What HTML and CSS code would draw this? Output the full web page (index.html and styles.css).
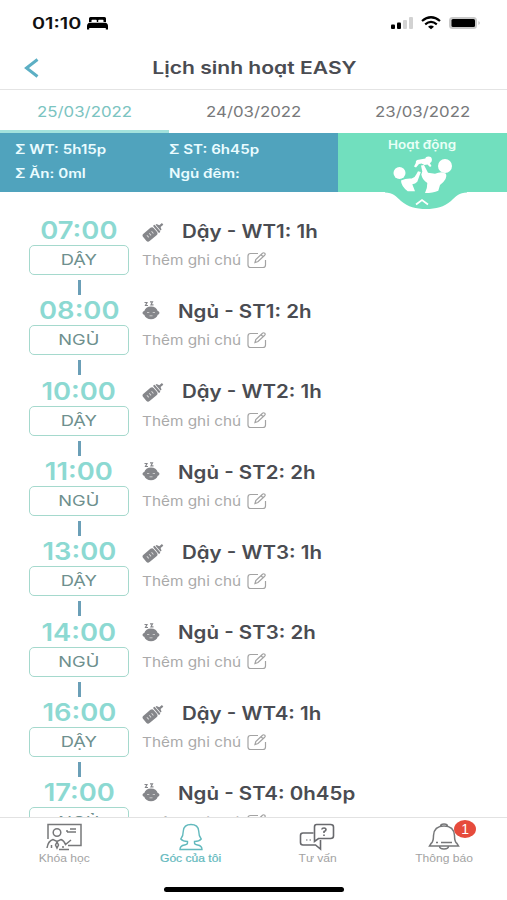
FILE: index.html
```html
<!DOCTYPE html>
<html lang="vi">
<head>
    <meta charset="UTF-8">
    <meta name="viewport" content="width=device-width, initial-scale=1.0">
    <title>Lịch sinh hoạt EASY</title>
    <link rel="stylesheet" href="styles.css">
</head>
<body>
    <svg class="sprite">
        <symbol id="bottle" viewBox="0 0 24 22">
            <g transform="rotate(-40 12 11)" fill="#85868a">
                <rect x="0" y="6" width="14.500" height="10" rx="2.500"/>
                <rect x="15.300" y="6" width="2.200" height="10" rx="1"/>
                <path d="M18.200 7h1.400l1.200 2.900h3.700v2.200h-3.700l-1.200 2.900h-1.400z"/>
                <path d="M4.200 9.500v3M7.400 9.500v3M10.600 9.500v3" stroke="#dcdcdc" stroke-width="1"/>
            </g>
        </symbol>
        <symbol id="baby" viewBox="0 0 18 20">
            <path d="M2.500 1.500h2.500L3.500 4.500h2.500M8 .8h2.500L9 3.800h2.500" fill="none" stroke="#85868a" stroke-width="1.200"/>
            <path d="M9 5.500c3.600 0 6 1.800 6.700 4.500 2.300.2 2.300 3.500.1 3.700-1 2.800-3.500 4.600-6.800 4.600s-5.800-1.800-6.800-4.600C0 13.500 0 10.200 2.300 10 3 7.300 5.400 5.500 9 5.500z" fill="#85868a"/>
            <path d="M5 11.500h2.300M10.700 11.500H13M7.500 14.800h3" stroke="#c9c9c9" stroke-width="1"/>
        </symbol>
        <symbol id="edit" viewBox="0 0 20 17">
            <g fill="none" stroke="#a3a3a3" stroke-width="1.200">
                <path d="M11 1.500H3.500Q1 1.500 1 4v9q0 2.500 2.500 2.500h12.500q2.500 0 2.500-2.500V8"/>
                <path d="M8 10.500l.8-3L15.500 1.200q1-.9 2.200 0 1 1 0 2L11 9.500zM14 2.700l2.200 2"/>
            </g>
        </symbol>
    </svg>

    <div class="status-bar">
        <span class="clock">01:10</span>
        <svg class="bed" width="21" height="13" viewBox="0 0 21 13">
            <path d="M3.500 0h14q1.500 0 1.500 1.500V5H16.500V3.500q0-.8-.8-.8H12q-.8 0-.8.800V5H9.800V3.500q0-.8-.8-.8H5.300q-.8 0-.8.800V5H2V1.500Q2 0 3.500 0zM2 5.800h17q2 1 2 3V12.500h-2.200V11H2.200v1.500H0V8.800q0-2 2-3z"/>
        </svg>
        <svg class="phone-state" width="92" height="15" viewBox="0 0 92 15">
            <rect x="1" y="8.500" width="4" height="4.500" rx="1"/>
            <rect x="7" y="6.500" width="4" height="6.500" rx="1"/>
            <rect x="13" y="4" width="4" height="9" rx="1" fill="#d2d2d2"/>
            <rect x="19" y="1" width="4" height="12" rx="1" fill="#d2d2d2"/>
            <path d="M32 5q9-7.500 18 0M35.200 8.300q5.800-4.700 11.600 0" fill="none" stroke="#000" stroke-width="2.200"/>
            <path d="M38 10.700q3-2.200 6 0l-3 2.500z"/>
            <rect x="59" y="1" width="28" height="12" rx="3.500" fill="#c9c9c9"/>
            <rect x="61.500" y="3" width="23.500" height="8" rx="1.500"/>
            <path d="M88.500 5q2.500 2 0 4z" fill="#bbb"/>
        </svg>
    </div>

    <header class="header">
        <svg class="back" width="16" height="20" viewBox="0 0 16 20">
            <path d="M13.500 1.500L2.500 10l11 8.500" fill="none" stroke="#5cafc4" stroke-width="3"/>
        </svg>
        <h1><span>Lịch sinh hoạt EASY</span></h1>
    </header>

    <div class="tabs">
        <div class="tab active"><span>25/03/2022</span></div>
        <div class="tab"><span>24/03/2022</span></div>
        <div class="tab"><span>23/03/2022</span></div>
    </div>

    <div class="summary">
        <div class="totals">
            <span class="total wt">Σ WT: 5h15p</span>
            <span class="total st">Σ ST: 6h45p</span>
            <span class="total eat">Σ Ăn: 0ml</span>
            <span class="total night">Ngủ đêm:</span>
        </div>
        <div class="activity">
            <span>Hoạt động</span>
            <svg class="bulge" width="82" height="19" viewBox="0 0 82 19">
                <path d="M0 0h82v1.500c-8 0-11 4-16 8.500C59 16 51 18 41 18S23 16 16 10C11 5.500 8 1.500 0 1.500z" fill="#71dfbe"/>
                <path d="M31 13.500l6-4.500 6 4.500" fill="none" stroke="#fff" stroke-width="1.800"/>
            </svg>
            <svg class="family" width="60" height="38" viewBox="0 0 60 38" fill="#fff">
                <circle cx="6.500" cy="17" r="6"/>
                <circle cx="52" cy="10" r="7"/>
                <circle cx="35.500" cy="3.800" r="3.400"/>
                <path d="M8 24.500q5-2.500 10.700-2 3.500-1 4.800-4.500l1.500-2.700 2.800.7-3.500 9.700q-2 2-5 2.500l2.700 7.100h-7.300Q8 30 8 24.500z"/>
                <path d="M28 9.500l3-.5 4 7.700 7 1q7-3 11 0 2 5-6 11.300l-1.700 5.700Q40 37 32 37q2.500-5 2.300-10-5-3-6-8.500l1-3z"/>
                <path d="M32.500 2.500l-8.500 1.500q-1.500 1-1.200 3l-1.800 3.500 2 1 3-3.500 2.500-.5 3 1.500 3-.5 2.500 2.500 1.500-1-2-3.500z"/>
            </svg>
        </div>
    </div>

    <main class="schedule">
        <div class="entry">
            <div class="slot">
                <div class="time"><span>07:00</span></div>
                <div class="state"><span>DẬY</span></div>
            </div>
            <div class="detail">
                <div class="name wake"><svg><use href="#bottle"/></svg><span>Dậy - WT1: 1h</span></div>
                <div class="note"><span>Thêm ghi chú</span><svg><use href="#edit"/></svg></div>
            </div>
        </div>
        <div class="entry">
            <div class="slot">
                <div class="time"><span>08:00</span></div>
                <div class="state"><span>NGỦ</span></div>
            </div>
            <div class="detail">
                <div class="name sleep"><svg><use href="#baby"/></svg><span>Ngủ - ST1: 2h</span></div>
                <div class="note"><span>Thêm ghi chú</span><svg><use href="#edit"/></svg></div>
            </div>
        </div>
        <div class="entry">
            <div class="slot">
                <div class="time"><span>10:00</span></div>
                <div class="state"><span>DẬY</span></div>
            </div>
            <div class="detail">
                <div class="name wake"><svg><use href="#bottle"/></svg><span>Dậy - WT2: 1h</span></div>
                <div class="note"><span>Thêm ghi chú</span><svg><use href="#edit"/></svg></div>
            </div>
        </div>
        <div class="entry">
            <div class="slot">
                <div class="time"><span>11:00</span></div>
                <div class="state"><span>NGỦ</span></div>
            </div>
            <div class="detail">
                <div class="name sleep"><svg><use href="#baby"/></svg><span>Ngủ - ST2: 2h</span></div>
                <div class="note"><span>Thêm ghi chú</span><svg><use href="#edit"/></svg></div>
            </div>
        </div>
        <div class="entry">
            <div class="slot">
                <div class="time"><span>13:00</span></div>
                <div class="state"><span>DẬY</span></div>
            </div>
            <div class="detail">
                <div class="name wake"><svg><use href="#bottle"/></svg><span>Dậy - WT3: 1h</span></div>
                <div class="note"><span>Thêm ghi chú</span><svg><use href="#edit"/></svg></div>
            </div>
        </div>
        <div class="entry">
            <div class="slot">
                <div class="time"><span>14:00</span></div>
                <div class="state"><span>NGỦ</span></div>
            </div>
            <div class="detail">
                <div class="name sleep"><svg><use href="#baby"/></svg><span>Ngủ - ST3: 2h</span></div>
                <div class="note"><span>Thêm ghi chú</span><svg><use href="#edit"/></svg></div>
            </div>
        </div>
        <div class="entry">
            <div class="slot">
                <div class="time"><span>16:00</span></div>
                <div class="state"><span>DẬY</span></div>
            </div>
            <div class="detail">
                <div class="name wake"><svg><use href="#bottle"/></svg><span>Dậy - WT4: 1h</span></div>
                <div class="note"><span>Thêm ghi chú</span><svg><use href="#edit"/></svg></div>
            </div>
        </div>
        <div class="entry">
            <div class="slot">
                <div class="time"><span>17:00</span></div>
                <div class="state"><span>NGỦ</span></div>
            </div>
            <div class="detail">
                <div class="name sleep"><svg><use href="#baby"/></svg><span>Ngủ - ST4: 0h45p</span></div>
                <div class="note"><span>Thêm ghi chú</span><svg><use href="#edit"/></svg></div>
            </div>
        </div>
    </main>

    <nav class="bottom-nav">
        <div class="nav-item">
            <svg width="36" height="28" viewBox="0 0 36 28" fill="none" stroke="#77787a" stroke-width="1.500">
                <path d="M2 16V1.500h33v21H22"/>
                <circle cx="11" cy="9.500" r="3.800"/>
                <path d="M1 25q1-7 6-8.500l4 2 4-2q3 1 4.500 5l5.500-4.500M5.500 25v-3M11 19l-1.500 3 1.500 3 1.500-3zM17 25v-2M13 26.500h10M20 8h2M24 6h6M21 9h9"/>
            </svg>
            <span>Khóa học</span>
        </div>
        <div class="nav-item active">
            <svg width="26" height="28" viewBox="0 0 26 28" fill="none" stroke="#62b9bd" stroke-width="1.400">
                <path d="M9.500 18.500Q5 18.500 2.800 16q2.500-3 2.500-8 .5-6.500 7.700-6.500T20.700 8q0 5 2.500 8-2 2.500-6.700 2.500v1.500q0 1.500 3 2 4.500.7 4.500 4.500H2q0-3.800 4.500-4.500 3-.5 3-2z"/>
            </svg>
            <span>Góc của tôi</span>
        </div>
        <div class="nav-item">
            <svg width="36" height="28" viewBox="0 0 36 28" fill="none" stroke="#68696d" stroke-width="1.600">
                <path d="M14.500 10H4Q1.500 10 1.500 12.500v7Q1.500 22 4 22h12.500l5 4v-9"/>
                <path d="M17.500 1.500h14Q34.500 1.500 34.500 4v9q0 2.500-3 2.500h-12l-4 3V4q0-2.500 2-2.500z"/>
                <path d="M7 17h1.500M10.500 17H12" stroke-width="1.200"/>
                <path d="M22.800 6.500q.2-1.500 2.200-1.500t2 1.700Q27 8 25 8.500V10M25 11.500V13"/>
            </svg>
            <span>Tư vấn</span>
        </div>
        <div class="nav-item">
            <svg width="32" height="28" viewBox="0 0 32 28" fill="none" stroke="#77787a" stroke-width="1.500">
                <path d="M12.500 3.500q0-2.500 3.500-2.500t3.500 2.500M3 20.500q2.500-1.500 2.500-8Q6 3 16 3t10.500 9.500q0 6.500 2.500 8l1.500 2.500h-29zM8 19.500h2M13 19.500h11M11.500 23q0 3 4.500 3t4.500-3"/>
            </svg>
            <span>Thông báo</span>
            <b class="badge">1</b>
        </div>
    </nav>
    <div class="home-bar"></div>
</body>
</html>
```
FILE: styles.css
```css
* {
    margin: 0;
    padding: 0;
    box-sizing: border-box;
}

body {
    width: 507px;
    height: 900px;
    overflow: hidden;
    display: flex;
    flex-direction: column;
    background: #fff;
    color: #4a4c52;
    font-family: 'Inter', 'Noto Sans', sans-serif;
    font-feature-settings: 'cv11';
}

span {
    display: inline-block;
    white-space: nowrap;
}

svg {
    flex-shrink: 0;
}

.sprite {
    position: absolute;
    width: 0;
    height: 0;
}

.status-bar {
    height: 46px;
    flex-shrink: 0;
    display: flex;
    align-items: center;
    padding-left: 32px;
}

.clock {
    width: 55px;
    font-size: 16px;
    font-weight: 600;
    color: #111;
    transform: scaleX(1.24);
    transform-origin: left;
}

.phone-state {
    margin-left: auto;
    margin-right: 25px;
}

.header {
    height: 44px;
    flex-shrink: 0;
    display: flex;
    align-items: center;
    padding-left: 24px;
    border-bottom: 1px solid #e4e4e4;
}

.header h1 {
    flex: 1;
    margin-right: 39px;
    text-align: center;
    font-size: 17px;
    font-weight: 600;
}

.header h1 span {
    transform: scaleX(1.24);
}

.tabs {
    height: 43px;
    flex-shrink: 0;
    display: grid;
    grid-template-columns: repeat(3, 1fr);
}

.tab {
    display: flex;
    align-items: center;
    justify-content: center;
    padding-top: 2px;
    font-size: 14px;
    color: #78797b;
    border-bottom: 3px solid transparent;
}

.tab span {
    transform: scaleX(1.2);
}

.tab.active {
    color: #7bc4c1;
    border-bottom-color: #a3e2dc;
}

.summary {
    height: 59px;
    flex-shrink: 0;
    display: flex;
}

.totals {
    width: 338px;
    padding: 4px 15px;
    display: grid;
    grid-template-columns: 154px 1fr;
    grid-template-rows: 24px 24px;
    align-items: center;
    background: #50a3bd;
    color: #eafcff;
    font-size: 12.500px;
    font-weight: 600;
}

.total {
    transform: scaleX(1.21);
    transform-origin: left;
}

.activity {
    position: relative;
    flex: 1;
    padding-top: 4px;
    text-align: center;
    font-size: 11.500px;
    line-height: 16px;
    font-weight: 600;
    color: #e9fff7;
    background: #71dfbe;
}

.activity span {
    transform: scaleX(1.17);
}

.bulge {
    position: absolute;
    left: 47px;
    top: 58px;
}

.family {
    position: absolute;
    left: 55px;
    top: 23px;
}

.schedule {
    flex: 1;
    min-height: 0;
    overflow: hidden;
    padding: 23px 0 0 29px;
}

.entry {
    height: 80.350px;
    display: flex;
}

.slot {
    width: 100px;
    display: flex;
    flex-direction: column;
    align-items: center;
}

.slot::after {
    content: '';
    width: 3px;
    height: 15px;
    margin-top: 5px;
    background: #6b9fb7;
}

.entry:last-child .slot::after {
    display: none;
}

.time {
    height: 30px;
    line-height: 31px;
    font-size: 24px;
    font-weight: 600;
    color: #8cd9d2;
}

.time span {
    transform: scaleX(1.14);
}

.state {
    width: 100px;
    height: 30px;
    border: 1.500px solid #a5d9cd;
    border-radius: 5px;
    text-align: center;
    line-height: 28px;
    font-size: 15px;
    color: #6e908e;
}

.state span {
    transform: scaleX(1.22);
}

.detail {
    padding-left: 12.500px;
}

.name {
    height: 30px;
    display: flex;
    align-items: center;
    padding-top: 2px;
    font-size: 18px;
    font-weight: 600;
}

.name span {
    transform: scaleX(1.14);
    transform-origin: left;
}

.name.wake svg {
    width: 23px;
    height: 21px;
    margin-right: 17px;
}

.name.sleep svg {
    width: 18px;
    height: 20px;
    margin-right: 18px;
}

.note {
    height: 30px;
    display: flex;
    align-items: center;
    font-size: 13px;
    color: #aaa;
}

.note span {
    width: 105px;
    transform: scaleX(1.18);
    transform-origin: left;
}

.note svg {
    width: 20px;
    height: 17px;
}

.bottom-nav {
    height: 70px;
    flex-shrink: 0;
    display: grid;
    grid-template-columns: repeat(4, 1fr);
    border-top: 1px solid #e2e2e2;
    background: #fff;
}

.nav-item {
    position: relative;
    display: flex;
    flex-direction: column;
    align-items: center;
    padding: 5px 0 0 1px;
    font-family: 'Liberation Sans', Arial, sans-serif;
    font-size: 10.500px;
    color: #a3a3a3;
}

.nav-item span {
    margin-top: 1px;
    transform: scaleX(1.15);
}

.nav-item.active {
    color: #62b9bd;
}

.nav-item.active span {
    -webkit-text-stroke: 0.200px;
}

.badge {
    position: absolute;
    left: 74px;
    top: 2px;
    width: 22px;
    height: 18px;
    border-radius: 50%;
    background: #e64b3c;
    color: #fff;
    font-size: 14px;
    font-weight: 400;
    line-height: 18px;
    text-align: center;
}

.home-bar {
    width: 180px;
    height: 5px;
    flex-shrink: 0;
    margin: 0 auto 8px 164px;
    border-radius: 3px;
    background: #000;
}
```
